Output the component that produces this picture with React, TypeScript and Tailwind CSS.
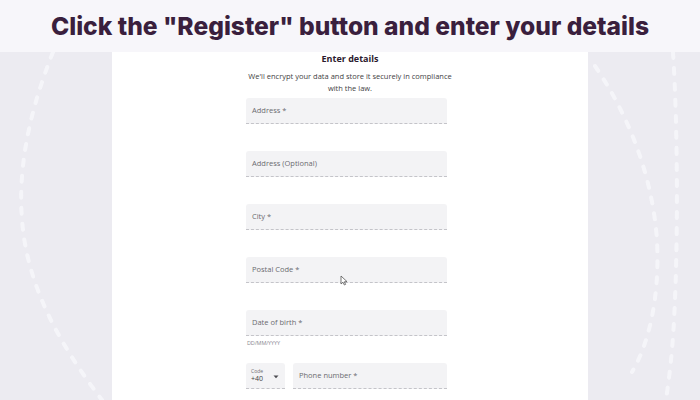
import React from 'react';

const FONT = { fontFamily: '"Open Sans", "Noto Sans", sans-serif' };

function Field({ label, helper }: { label: string; helper?: string }) {
  return (
    <div className="h-[53px] w-[201px] flex flex-col">
      <div className="h-[26px] w-full bg-[#f3f3f5] rounded-t-[3px] border-b border-dashed border-[#c4c4c9] flex items-center pl-[6px]">
        <span className="text-[7.5px] text-[#6b6b70]">{label}</span>
      </div>
      {helper && <span className="text-[5.5px] text-[#8a8a90] mt-[3px] pl-[1px] tracking-tight">{helper}</span>}
    </div>
  );
}

function Decor() {
  return (
    <svg className="absolute inset-0" width="700" height="348" viewBox="0 52 700 348" fill="none">
      <g stroke="#f8f8fb" strokeOpacity="0.8" strokeWidth="4" strokeLinecap="round" strokeDasharray="6 10">
        <path d="M53 52 C 30 110, 16 170, 23 230 C 30 290, 60 345, 102 400" />
        <path d="M595 66 C 625 110, 652 170, 657 240 C 660 300, 648 345, 632 372" />
        <path d="M673 52 C 678 130, 678 250, 674 320 C 672 360, 668 385, 666 400" />
      </g>
    </svg>
  );
}

export default function App() {
  return (
    <div className="w-[700px] h-[400px] overflow-hidden bg-[#ecebf1] flex flex-col" style={FONT}>
      <div className="h-[52px] shrink-0 bg-[#f7f6fa] flex items-center justify-center">
        <h1 className="text-[24.6px] font-extrabold text-[#3a1f3d]" style={{ fontFamily: 'Inter, "Open Sans", sans-serif' }}>
          Click the "Register" button and enter your details
        </h1>
      </div>
      <div className="flex-1 relative flex">
        <Decor />
        <div className="relative ml-[112px] w-[476px] bg-white flex flex-col items-center">
          <h2 className="text-[9px] font-bold text-[#2b1a2e] leading-[14px]">Enter details</h2>
          <p className="text-[7.5px] text-[#3f3f44] leading-[12px] text-center w-[205px] mt-[4px]">
            We'll encrypt your data and store it securely in compliance with the law.
          </p>
          <div className="mt-[4px] flex flex-col self-start ml-[134px]">
            <Field label="Address *" />
            <Field label="Address (Optional)" />
            <Field label="City *" />
            <Field label="Postal Code *" />
            <Field label="Date of birth *" helper="DD/MM/YYYY" />
            <div className="flex w-[201px] gap-[8px]">
              <div className="h-[26px] w-[39px] bg-[#f3f3f5] rounded-t-[3px] border-b border-dashed border-[#c4c4c9] flex items-center pl-[5px] pr-[6px]">
                <div className="flex flex-col flex-1 leading-none">
                  <span className="text-[5px] text-[#6b6b70]">Code</span>
                  <span className="text-[7px] text-[#3f3f44] mt-[1px]">+40</span>
                </div>
                <svg width="6" height="4" viewBox="0 0 6 4" className="mt-[3px]"><path d="M0.5 0.5 L3 3.3 L5.5 0.5 Z" fill="#4a4a50" /></svg>
              </div>
              <div className="h-[26px] flex-1 bg-[#f3f3f5] rounded-t-[3px] border-b border-dashed border-[#c4c4c9] flex items-center pl-[6px]">
                <span className="text-[7.5px] text-[#6b6b70]">Phone number *</span>
              </div>
            </div>
          </div>
          <svg className="absolute left-[228px] top-[223px]" width="8" height="11" viewBox="0 0 8 11">
            <path d="M1 1 L1 9 L3 7.2 L4.4 10 L5.6 9.4 L4.3 6.8 L7 6.6 Z" fill="#fff" stroke="#555" strokeWidth="0.8" strokeLinejoin="round" />
          </svg>
        </div>
      </div>
    </div>
  );
}
